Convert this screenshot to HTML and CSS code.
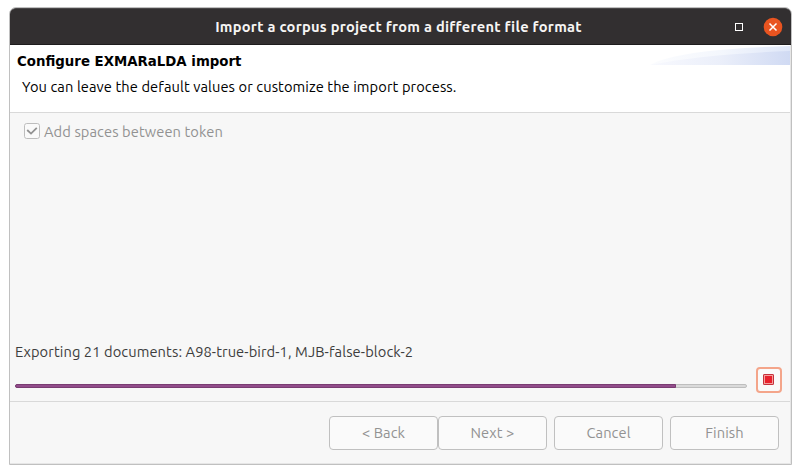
FILE: index.html
```html
<!DOCTYPE html>
<html lang="en">
<head>
<meta charset="utf-8">
<title>Import a corpus project from a different file format</title>
<link rel="stylesheet" href="styles.css">
</head>
<body>
<div class="window">
  <header class="titlebar">
    <span class="title">Import a corpus project from a different file format</span>
    <div class="controls">
      <span class="maximize"></span>
      <svg class="close" width="20" height="20" viewBox="0 0 20 20"><circle cx="10" cy="10" r="9.3" fill="#e95420"/><path d="M6.5 6.5l7 7M13.5 6.5l-7 7" stroke="#fff" stroke-width="1.5"/></svg>
    </div>
  </header>
  <section class="banner">
    <div class="banner-text">
      <h1 class="heading">Configure EXMARaLDA import</h1>
      <p class="desc">You can leave the default values or customize the import process.</p>
    </div>
    <svg class="swoosh" width="141" height="20" viewBox="0 0 141 20">
      <defs>
        <linearGradient id="g1"><stop offset="0" stop-color="#fbfcfe"/><stop offset=".5" stop-color="#f4f7fd"/><stop offset="1" stop-color="#dfe7f8"/></linearGradient>
        <linearGradient id="g2"><stop offset="0" stop-color="#f8f9fe"/><stop offset=".5" stop-color="#ebeffa"/><stop offset="1" stop-color="#d0daf3"/></linearGradient>
      </defs>
      <path d="M1 20C22 8 75 3 141 1V20z" fill="url(#g1)"/>
      <path d="M1 20C40 12 90 8 141 6V20z" fill="url(#g2)"/>
    </svg>
  </section>
  <main class="content">
    <label class="option">
      <svg class="check" width="16" height="16" viewBox="0 0 16 16"><rect x=".5" y=".5" width="15" height="15" rx="2.2" fill="#fafafa" stroke="#bdbdbd"/><path d="M3.2 7L7 10.6L12.8 4.8" fill="none" stroke="#929292" stroke-width="1.8"/></svg>
      <span class="option-text">Add spaces between token</span>
    </label>
    <div class="progress-area">
      <p class="status">Exporting 21 documents: A98-true-bird-1, MJB-false-block-2</p>
      <div class="progress-row">
        <div class="track"><div class="bar" style="width:661px"></div></div>
        <div class="stop"><svg width="11" height="11" viewBox="0 0 11 11"><rect x=".5" y=".5" width="10" height="10" rx=".6" fill="#e9202c" stroke="#c4313c"/><rect x="1.5" y="1.5" width="8" height="8" fill="none" stroke="#f4a09c"/></svg></div>
      </div>
    </div>
  </main>
  <footer class="footer">
    <div class="pair"><div class="btn"><span class="back">&lt; Back</span></div><div class="btn"><span class="next">Next &gt;</span></div></div>
    <div class="btn"><span class="cancel">Cancel</span></div>
    <div class="btn"><span class="finish">Finish</span></div>
  </footer>
</div>
</body>
</html>
```
FILE: styles.css
```css
* { box-sizing: border-box; }
body {
  margin: 0;
  padding: 7px 0 0 9px;
  background: #fff;
  font-family: Ubuntu, "Noto Sans", sans-serif;
  font-size: 14.667px;
  letter-spacing: .09px;
  line-height: 20px;
  white-space: nowrap;
}
h1, p { margin: 0; }
.window {
  width: 783px;
  height: 458px;
  display: flex;
  flex-direction: column;
  border: 1px solid #c0c0c0;
  border-radius: 7px 7px 0 0;
  background: #f7f7f7;
  box-shadow: inset -1px -1px #e6e6e6;
}
.titlebar {
  height: 37px;
  flex: none;
  display: grid;
  grid-template-columns: 1fr auto 1fr;
  align-items: center;
  background: #322f30;
  border-top: 1px solid #4a4748;
  border-bottom: 1px solid #1e1c1d;
  border-radius: 6px 6px 0 0;
  color: #f6f5f4;
}
.title { grid-column: 2; font-weight: 700; letter-spacing: .26px; margin-left: -4px; }
.controls { display: flex; justify-content: flex-end; align-items: center; gap: 20px; padding-right: 8px; }
.maximize { width: 8px; height: 8px; border: 1px solid #fff; }
.close { display: block; }
.banner {
  height: 68px;
  flex: none;
  margin-right: 1px;
  display: flex;
  justify-content: space-between;
  background: #fff;
  border-bottom: 1px solid #d9d9d9;
}
.banner-text { padding: 7px 0 0 7px; color: #000; }
.heading { font-family: "DejaVu Sans", sans-serif; font-size: 13.333px; font-weight: 700; line-height: 20px; letter-spacing: 0; }
.desc { padding: 5px 0 0 5px; }
.content {
  flex: 1;
  display: flex;
  flex-direction: column;
  justify-content: space-between;
  margin-right: 1px;
  padding: 8px 8px 8px 5px;
  border-bottom: 1px solid #d9d9d9;
}
.option { display: flex; align-items: center; gap: 4px; height: 20px; padding-left: 9px; color: #929292; }
.option-text { padding-top: 2px; }
.status { color: #3d3d3d; }
.progress-row { display: flex; align-items: center; justify-content: space-between; margin-top: 5px; }
.track {
  width: 732px;
  height: 4px;
  margin-top: 11px;
  border: 1px solid #bebebe;
  border-radius: 2px;
  background: #dadada;
}
.bar { height: 4px; margin: -1px; border: 1px solid #7a3c72; border-radius: 2px 0 0 2px; background: #924d8b; }
.stop {
  width: 26px;
  height: 26px;
  display: flex;
  justify-content: flex-start;
  padding: 5px 0 0 5px;
  border: 2px solid #f4a58a;
  border-radius: 4px;
  background: #fafafa;
}
.footer { height: 62px; flex: none; display: flex; justify-content: flex-end; gap: 7px; padding: 14px 12px 0 0; }
.pair { display: flex; }
.btn {
  width: 109px;
  height: 34px;
  border: 1px solid #c0c0c0;
  border-radius: 4px;
  background: #fafafa;
  color: #929292;
  text-align: center;
  line-height: 32px;
}
```
